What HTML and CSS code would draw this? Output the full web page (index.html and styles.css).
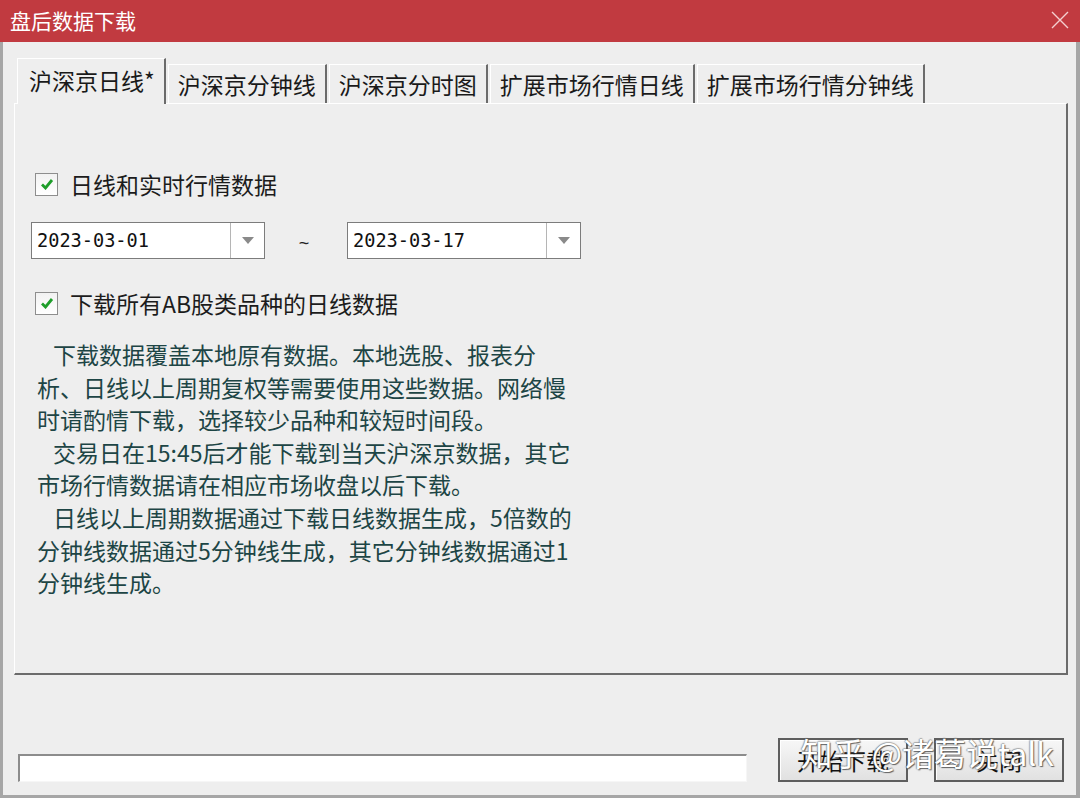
FILE: index.html
```html
<!DOCTYPE html>
<html lang="zh-CN">
<head>
<meta charset="utf-8">
<title>盘后数据下载</title>
<link rel="stylesheet" href="styles.css">
</head>
<body>
<div class="window">
  <div class="titlebar">
    <span class="title">盘后数据下载</span>
    <svg class="close" width="18" height="18" viewBox="0 0 18 18"><path d="M1 1L17 17M17 1L1 17" stroke="#f4cfcf" stroke-width="1.4" fill="none"/></svg>
  </div>
  <div class="client">
    <div class="tabs">
      <div class="tab active">沪深京日线*</div>
      <div class="tab">沪深京分钟线</div>
      <div class="tab">沪深京分时图</div>
      <div class="tab">扩展市场行情日线</div>
      <div class="tab">扩展市场行情分钟线</div>
    </div>
    <div class="panel">
      <div class="check first">
        <span class="box"><svg width="14" height="12" viewBox="0 0 14 12"><path d="M2 6.5L5.5 10L12 2" stroke="#1e9e2a" stroke-width="2.8" fill="none"/></svg></span>
        <span class="label">日线和实时行情数据</span>
      </div>
      <div class="dates">
        <div class="combo"><span class="val">2023-03-01</span><span class="drop"><svg width="12" height="7" viewBox="0 0 12 7"><path d="M0 0H12L6 7Z" fill="#8a8a8a"/></svg></span></div>
        <span class="tilde">~</span>
        <div class="combo"><span class="val">2023-03-17</span><span class="drop"><svg width="12" height="7" viewBox="0 0 12 7"><path d="M0 0H12L6 7Z" fill="#8a8a8a"/></svg></span></div>
      </div>
      <div class="check second">
        <span class="box"><svg width="14" height="12" viewBox="0 0 14 12"><path d="M2 6.5L5.5 10L12 2" stroke="#1e9e2a" stroke-width="2.8" fill="none"/></svg></span>
        <span class="label">下载所有AB股类品种的日线数据</span>
      </div>
      <div class="desc">
        <p>下载数据覆盖本地原有数据。本地选股、报表分<br>析、日线以上周期复权等需要使用这些数据。网络慢<br>时请酌情下载，选择较少品种和较短时间段。</p>
        <p>交易日在15:45后才能下载到当天沪深京数据，其它<br>市场行情数据请在相应市场收盘以后下载。</p>
        <p>日线以上周期数据通过下载日线数据生成，5倍数的<br>分钟线数据通过5分钟线生成，其它分钟线数据通过1<br>分钟线生成。</p>
      </div>
    </div>
    <div class="footer">
      <div class="progress"></div>
      <button class="btn start">开始下载</button>
      <button class="btn close-btn">关闭</button>
      <div class="watermark">知乎 @诸葛说talk</div>
    </div>
  </div>
</div>
</body>
</html>
```
FILE: styles.css
```css
* { box-sizing: border-box; }
html, body { margin: 0; padding: 0; }
body {
  width: 1080px;
  height: 798px;
  overflow: hidden;
  background: #eeeeee;
  font-family: "Noto Sans CJK SC", "Microsoft YaHei", sans-serif;
}
.window {
  width: 1080px;
  height: 798px;
  display: flex;
  flex-direction: column;
}
.titlebar {
  height: 42px;
  flex: none;
  background: #c13a40;
  display: flex;
  align-items: center;
  justify-content: space-between;
  padding: 0 11px 2px 10px;
}
.title {
  color: #ffffff;
  font-size: 21px;
  line-height: 26px;
}
.close { display: block; }
.client {
  flex: 1;
  display: flex;
  flex-direction: column;
  background: #eeeeee;
  border-left: 3px solid #a6a6a6;
  border-right: 4px solid #a6a6a6;
  border-bottom: 3px solid #a6a6a6;
  position: relative;
}
.tabs {
  display: flex;
  align-items: flex-end;
  margin: 16px 0 0 14px;
  height: 45px;
  position: relative;
  z-index: 1;
}
.tab {
  height: 39px;
  display: flex;
  align-items: center;
  padding: 0 9px 0 9px;
  margin-right: 2px;
  border-top: 1px solid #ffffff;
  border-left: 1px solid #ffffff;
  border-right: 2px solid #6b6b6b;
  background: #eeeeee;
  font-size: 23px;
  color: #1a1a1a;
  white-space: nowrap;
  line-height: 26px;
}
.tab.active {
  height: 46px;
  margin-bottom: -1px;
  padding: 0 9px 3px 11px;
}
.panel {
  height: 572px;
  margin: 0 8px 0 11px;
  border-top: 1px solid #ffffff;
  border-left: 1px solid #ffffff;
  border-right: 2px solid #6b6b6b;
  border-bottom: 2px solid #6b6b6b;
  padding-left: 16px;
  display: flex;
  flex-direction: column;
  align-items: flex-start;
}
.check {
  display: flex;
  align-items: center;
  height: 24px;
  margin-left: 4px;
}
.check.first { margin-top: 68px; }
.check.second { margin-top: 32px; }
.box {
  width: 23px;
  height: 23px;
  border: 1px solid #8e8e8e;
  background: linear-gradient(#f2f2f2, #ffffff);
  display: flex;
  align-items: center;
  justify-content: center;
}
.box svg { display: block; }
.label {
  margin-left: 12px;
  font-size: 23px;
  line-height: 26px;
  color: #1c1c1c;
  white-space: nowrap;
}
.dates {
  display: flex;
  align-items: center;
  margin-top: 26px;
}
.combo {
  width: 234px;
  height: 37px;
  border: 1px solid #7c7c7c;
  background: #ffffff;
  display: flex;
  align-items: center;
}
.val {
  flex: 1;
  padding-left: 5px;
  font-family: "DejaVu Sans Mono", "Liberation Mono", monospace;
  font-size: 18.6px;
  color: #111111;
}
.drop {
  width: 34px;
  height: 100%;
  border-left: 1px solid #b5b5b5;
  display: flex;
  align-items: center;
  justify-content: center;
}
.drop svg { display: block; }
.tilde {
  width: 82px;
  text-align: center;
  font-family: "Liberation Sans", Arial, sans-serif;
  font-size: 18px;
  color: #222222;
  padding-top: 6px;
  padding-right: 4px;
}
.desc {
  margin: 23px 0 0 6px;
  font-size: 23px;
  line-height: 32.6px;
  color: #1d4545;
  white-space: nowrap;
}
.desc p {
  margin: 0;
  text-indent: 16px;
}
.footer {
  display: flex;
  align-items: flex-end;
  height: 44px;
  margin-top: 63px;
  padding: 0 12px 0 15px;
  position: relative;
}
.progress {
  width: 729px;
  height: 28px;
  background: #ffffff;
  border-top: 2px solid #8c8c8c;
  border-left: 2px solid #8c8c8c;
  border-right: 1px solid #f6f6f6;
  border-bottom: 1px solid #f6f6f6;
  margin-right: 31px;
}
.btn {
  width: 130px;
  height: 44px;
  border: 2px solid #5e5e5e;
  background: linear-gradient(#f7f7f7, #e1e1e1);
  box-shadow: inset 1px 1px 0 #ffffff;
  font-family: "Noto Sans CJK SC", sans-serif;
  font-size: 23px;
  color: #111111;
  padding: 0;
  line-height: 26px;
}
.btn.start { margin-right: 26px; }
.watermark {
  position: absolute;
  right: 22px;
  top: -6px;
  font-size: 32px;
  line-height: 40px;
  color: #ffffff;
  text-shadow: 1px 1px 1px rgba(40, 40, 40, 0.7), -1px 0 1px rgba(90, 90, 90, 0.45), 0 -1px 1px rgba(90, 90, 90, 0.45);
  white-space: nowrap;
  pointer-events: none;
}
```
